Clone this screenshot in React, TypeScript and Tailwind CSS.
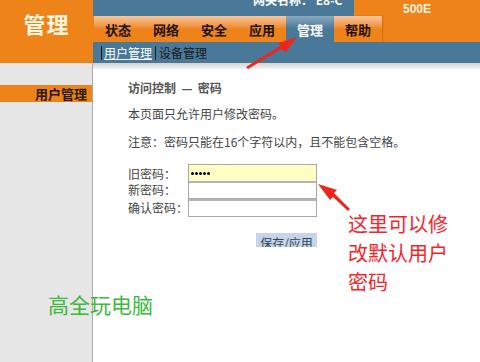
import React from "react";

const tabs = ["状态", "网络", "安全", "应用", "管理", "帮助"];

export default function App() {
  return (
    <div
      className="relative w-[480px] h-[362px] flex overflow-hidden bg-white text-[#333]"
      style={{ fontFamily: '"Noto Sans CJK SC", "Noto Sans", sans-serif' }}
    >
      {/* left column */}
      <div className="w-[93px] flex flex-col shrink-0">
        <div className="h-[63px] bg-[#ee8419] flex justify-center pt-[9px]">
          <span className="text-[22px] leading-[28px] font-bold text-[#fff6e0] tracking-[1px]">管理</span>
        </div>
        <div className="flex-1 bg-[#e6e6e6] border-r border-[#a9a9a9] pt-[22px]">
          <div className="h-[17px] bg-[#ee8419] flex items-center justify-end pr-[5px] text-[13px] leading-[17px] font-bold text-[#2a1a0a]">
            用户管理
          </div>
        </div>
      </div>

      {/* right column */}
      <div className="flex-1 flex flex-col">
        <div className="h-[42px] bg-[#ee8419] flex flex-col">
          <div className="h-[16px] flex">
            <div className="w-[261px] h-[16px] bg-[#497898] overflow-hidden relative">
              <span className="absolute left-[160px] top-[-8px] text-[12px] leading-[16px] font-bold text-white whitespace-nowrap">
                网关名称：&nbsp;E8-C
              </span>
            </div>
            <div className="flex-1 flex justify-center pt-[3px]">
              <span className="text-[12px] leading-[13px] font-bold text-[#fdf1dc]" style={{ fontFamily: '"Liberation Sans", sans-serif' }}>500E</span>
            </div>
          </div>
          <div className="h-[26px] flex pl-[1px]">
            {tabs.map((t) => {
              const active = t === "管理";
              const help = t === "帮助";
              return (
                <div
                  key={t}
                  className={
                    active
                      ? "w-[48px] h-[26px] rounded-t-[3px] bg-gradient-to-b from-[#8aa9bf] via-[#4a7898] to-[#497898] flex items-center justify-center pt-[2px] text-[13px] font-bold text-white"
                      : help
                      ? "w-[48px] h-[26px] bg-gradient-to-b from-[#f7c79a] via-[#ee8419] to-[#ee8419] shadow-[1px_0_2px_rgba(0,0,0,0.15)] flex items-center justify-center pt-[2px] text-[13px] font-bold text-[#1d1208]"
                      : "w-[48px] h-[26px] bg-gradient-to-b from-[#f7c79a] via-[#ee8419] to-[#ee8419] flex items-center justify-center pt-[2px] text-[13px] font-bold text-[#1d1208]"
                  }
                >
                  {t}
                </div>
              );
            })}
          </div>
        </div>
        <div className="h-[21px] bg-[#497898] flex items-center pl-[8px] text-[12px] leading-[14px]">
          <span className="w-[1px] h-[14px] bg-[#1a1a1a] mr-[2px]" />
          <span className="text-white underline underline-offset-[1px]">用户管理</span>
          <span className="w-[1px] h-[14px] bg-[#1a1a1a] mx-[3px]" />
          <span className="text-[#1a1a1a]">设备管理</span>
        </div>
        <div className="h-[6px] bg-gradient-to-b from-[#d2d2d2] to-[#f4f4f4]" />

        <div className="pl-[35px] flex flex-col text-[12px] text-[#444]">
          <div className="mt-[12px] h-[14px] leading-[14px] font-bold text-[#555] whitespace-nowrap">
            访问控制&nbsp;&nbsp;—&nbsp;&nbsp;密码
          </div>
          <div className="mt-[12px] h-[14px] leading-[14px] whitespace-nowrap">本页面只允许用户修改密码。</div>
          <div className="mt-[14px] h-[14px] leading-[14px] whitespace-nowrap">注意：密码只能在16个字符以内，且不能包含空格。</div>

          <div className="mt-[15px] flex flex-col">
            <div className="flex h-[18px]">
              <div className="w-[60px] leading-[18px] pt-[1px]">旧密码：</div>
              <div className="w-[129px] h-[18px] bg-[#ffffc4] border border-[#a8a8a8] flex items-center pl-[2px] gap-[1px]">
                <span className="w-[3px] h-[3px] rounded-full bg-black" />
                <span className="w-[3px] h-[3px] rounded-full bg-black" />
                <span className="w-[3px] h-[3px] rounded-full bg-black" />
                <span className="w-[3px] h-[3px] rounded-full bg-black" />
                <span className="w-[3px] h-[3px] rounded-full bg-black" />
              </div>
            </div>
            <div className="flex h-[18px]">
              <div className="w-[60px] leading-[18px] -mt-[1px]">新密码：</div>
              <div className="w-[129px] h-[18px] bg-white border border-[#a8a8a8] border-t-2 border-t-[#b4b4b4] -mt-[1px]" />
            </div>
            <div className="flex h-[18px]">
              <div className="w-[60px] leading-[18px] -mt-[1px]">确认密码：</div>
              <div className="w-[129px] h-[18px] bg-white border border-[#a8a8a8] border-t-2 border-t-[#b4b4b4] -mt-[1px]" />
            </div>
          </div>

          <div className="mt-[15px] ml-[128px] w-[61px] h-[14px] bg-[#c6d5ea] overflow-hidden flex justify-center">
            <span className="text-[12px] leading-[14px] mt-[3px] text-[#345] whitespace-nowrap">保存/应用</span>
          </div>
        </div>
      </div>

      {/* annotations */}
      <svg className="absolute left-0 top-0 pointer-events-none" width="480" height="362">
        <polygon points="246,67 248,69 281,49 286,52 297,37 278,43 280,46" fill="#f0261e" />
        <polygon points="350,209 348,211 333,197 330,200 318,184 337,190 334,193" fill="#f0261e" />
      </svg>
      <div
        className="absolute left-[348px] top-[209px] text-[20px] leading-[29px] text-[#f2262a] whitespace-nowrap"
        style={{ fontFamily: '"Noto Sans CJK SC", sans-serif' }}
      >
        这里可以修
        <br />
        改默认用户
        <br />
        密码
      </div>
      <div
        className="absolute left-[48px] top-[290px] text-[21px] leading-[28px] text-[#3cb83c] whitespace-nowrap"
        style={{ fontFamily: '"Noto Sans CJK SC", sans-serif' }}
      >
        高全玩电脑
      </div>
    </div>
  );
}
